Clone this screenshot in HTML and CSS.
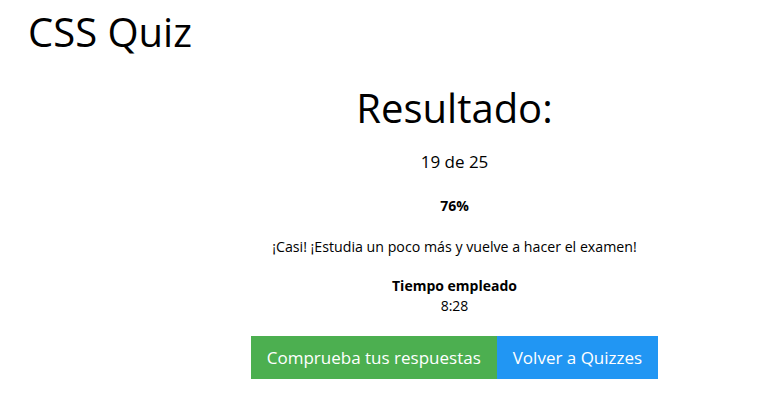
FILE: index.html
```html
<!DOCTYPE html>
<html lang="es">
<head>
<meta charset="utf-8">
<title>CSS Quiz</title>
<link rel="stylesheet" href="styles.css">
</head>
<body>
<header class="top">
  <h1 class="title">CSS Quiz</h1>
</header>
<main class="main">
  <section class="result">
    <h2 class="heading">Resultado:</h2>
    <p class="score">19 de 25</p>
    <p class="pct">76%</p>
    <p class="msg">¡Casi! ¡Estudia un poco más y vuelve a hacer el examen!</p>
    <p class="time-label">Tiempo empleado</p>
    <p class="time">8:28</p>
    <div class="actions">
      <a class="btn btn-green" href="#">Comprueba tus respuestas</a>
      <a class="btn btn-blue" href="#">Volver a Quizzes</a>
    </div>
  </section>
</main>
</body>
</html>
```
FILE: styles.css
```css
html, body {
  margin: 0;
  padding: 0;
  background: #fff;
  color: #000;
  font-family: "Open Sans", "Noto Sans", sans-serif;
}
.top {
  padding: 7px 0 0 28px;
}
.title {
  margin: 0;
  font-weight: 400;
  font-size: 40px;
  line-height: 49px;
}
.main {
  margin-left: 150px;
}
.result {
  display: flex;
  flex-direction: column;
  align-items: center;
  text-align: center;
}
.heading {
  margin: 24px 0 0;
  font-weight: 400;
  font-size: 40px;
  line-height: 56px;
}
.score {
  margin: 14px 0 0;
  font-size: 17px;
  line-height: 24px;
}
.pct {
  margin: 22px 0 0;
  font-size: 14px;
  font-weight: 700;
  line-height: 20px;
}
.msg {
  margin: 21px 0 0;
  font-size: 14.2px;
  line-height: 20px;
}
.time-label {
  margin: 19px 0 0;
  font-size: 14px;
  font-weight: 700;
  line-height: 20px;
}
.time {
  margin: 0;
  font-size: 14px;
  line-height: 20px;
}
.actions {
  display: flex;
  margin-top: 20px;
}
.btn {
  display: block;
  color: #fff;
  text-decoration: none;
  font-size: 17px;
  line-height: 43px;
  padding: 0 16px;
}
.btn-green { background: #4CAF50; }
.btn-blue { background: #2196F3; }
```
